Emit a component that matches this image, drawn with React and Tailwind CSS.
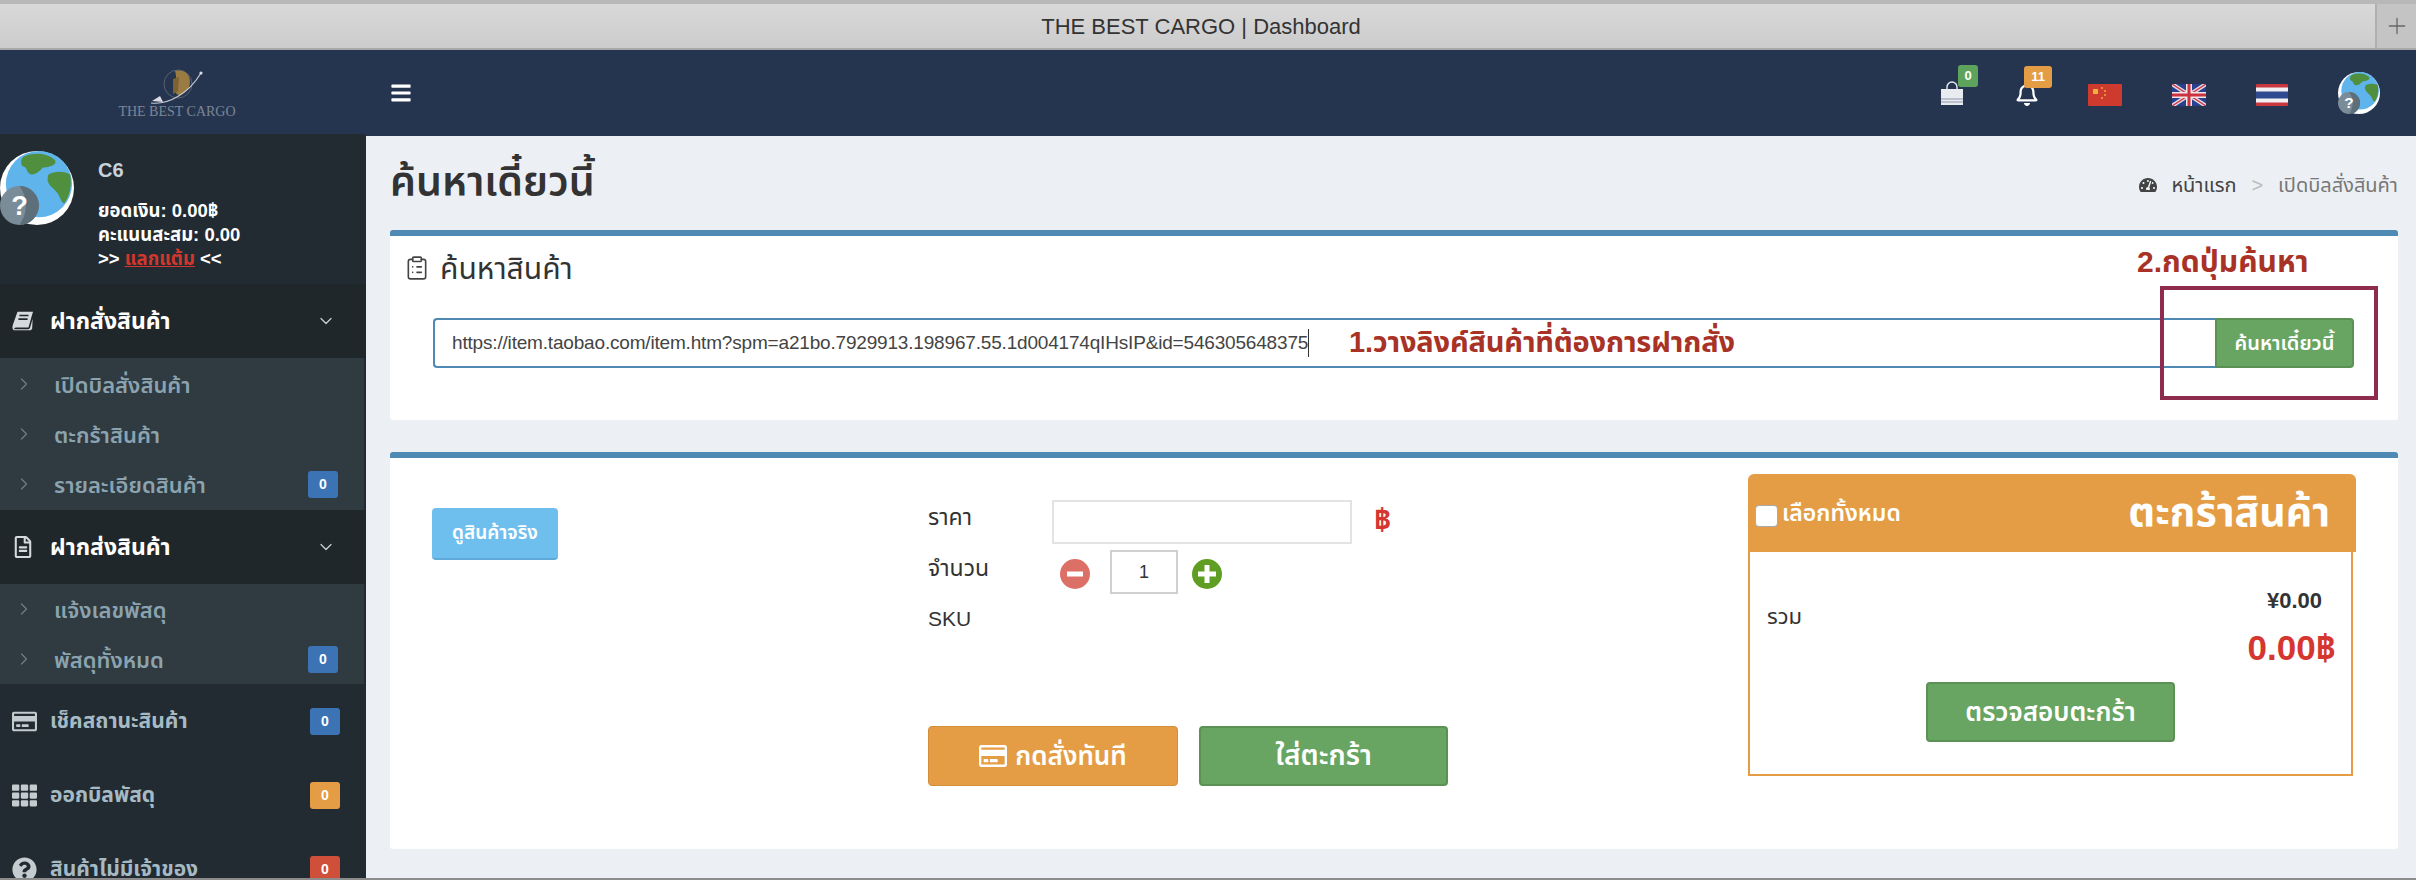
import React from 'react';
import { ChevronDown, ChevronRight, ClipboardList, Plus } from 'lucide-react';
import {
  FaBars,
  FaQuestionCircle,
  FaRegBell,
  FaRegCreditCard,
  FaRegFileAlt,
  FaTachometerAlt,
  FaTh,
} from 'react-icons/fa';

const URL_VALUE = 'https://item.taobao.com/item.htm?spm=a21bo.7929913.198967.55.1d004174qIHsIP&id=546305648375';

const Globe = ({ className }) => (
  <svg viewBox="0 0 76 76" className={className}>
    <circle cx="38" cy="38" r="38" fill="#fff" />
    <circle cx="40" cy="34" r="34" fill="#5fb4ec" />
    <path d="M24 6c10-5 24-4 32 3 4 4-4 8-12 8-4 5-10 9-14 6-3-2-2-6-6-7-3-1-3-7 0-10z" fill="#4f8f3d" />
    <path d="M50 24c6-3 14-4 22 0 2 10 0 22-6 30-4-2-4-8-8-12-4-5-12-8-8-18z" fill="#4f8f3d" />
    <circle cx="20" cy="56" r="20" fill="#7a8c98" />
    <path d="M20 36a20 20 0 0 1 0 40 34 34 0 0 0 0-40z" fill="#5d6f7b" />
    <text x="20" y="66" textAnchor="middle" fontSize="28" fontWeight="700" fill="#fff" fontFamily="Liberation Sans, sans-serif">?</text>
  </svg>
);

const Logo = () => (
  <div className="flex flex-col items-center">
    <svg viewBox="0 0 56 38" className="w-[56px] h-[38px]">
      <circle cx="29" cy="17" r="14" fill="none" stroke="#56616f" strokeWidth="1" />
      <path d="M26 4c9-2 15 3 15 11 0 7-6 12-11 14-3-3-7-6-5-10 2-3 3-9 1-15z" fill="#9a7b42" />
      <path d="M24 12l6-2-1 14-5 3z" fill="#7d6233" />
      <path d="M2 36c18 2 38-10 50-30" fill="none" stroke="#c5cad2" strokeWidth="1.2" />
      <circle cx="52" cy="6" r="1.6" fill="#d9dde3" />
      <path d="M3 34l8-5 3 6z" fill="#d9dde3" />
    </svg>
    <span className="font-['Liberation_Serif',serif] text-[14px] leading-[14px] text-[#7c8695] whitespace-nowrap">THE BEST CARGO</span>
  </div>
);

const BagIcon = () => (
  <svg viewBox="0 0 24 24" className="w-[24px] h-[24px]">
    <path d="M7 9V6a5 5 0 0 1 10 0v3" fill="none" stroke="#e8ebef" strokeWidth="1.4" />
    <path d="M1 8h22v16H1z" fill="#e8ebef" />
    <path d="M1 18h22M1 21h22" stroke="#8d97a8" strokeWidth="1" />
  </svg>
);

// slanted book, the icon packages only have an upright one
const BookIcon = ({ size, className }) => (
  <svg viewBox="0 0 24 22" width={size} height={size} className={className}>
    <path d="M6 1h17l-1 3-4 14H4.500C2.500 18 2 19 3 20h15l1.500-1 3-10.500-.5 11-1.500 1.500H3C.5 21 0 18 1 15z" fill="currentColor" />
    <path d="M8 5h10M7 9h10" stroke="#20272b" strokeWidth="1.800" />
  </svg>
);

const ChinaFlag = () => (
  <svg viewBox="0 0 34 22" className="w-[34px] h-[22px]">
    <rect width="34" height="22" rx="1" fill="#cf3a2e" />
    <rect x="5" y="5" width="5" height="5" fill="#eeb13c" />
    <rect x="13" y="3" width="2" height="2" fill="#e08c38" />
    <rect x="16" y="6" width="2" height="2" fill="#e08c38" />
    <rect x="16" y="10" width="2" height="2" fill="#e08c38" />
    <rect x="13" y="13" width="2" height="2" fill="#e08c38" />
  </svg>
);

const UkFlag = () => (
  <svg viewBox="0 0 34 22" className="w-[34px] h-[22px]">
    <rect width="34" height="22" fill="#27408f" />
    <path d="M0 0l34 22M34 0L0 22" stroke="#e8dce0" strokeWidth="4" />
    <path d="M0 0l34 22M34 0L0 22" stroke="#c9374a" strokeWidth="1.4" />
    <path d="M17 0v22M0 11h34" stroke="#efe6e8" strokeWidth="6" />
    <path d="M17 0v22M0 11h34" stroke="#cc3340" strokeWidth="3" />
  </svg>
);

const ThaiFlag = () => (
  <svg viewBox="0 0 32 22" className="w-[32px] h-[22px]">
    <rect width="32" height="22" rx="1" fill="#c9373f" />
    <rect y="3.5" width="32" height="15" fill="#f2f0f2" />
    <rect y="7.5" width="32" height="7" fill="#2f4a8e" />
  </svg>
);

const Badge = ({ color, children, className = '' }) => (
  <span className={`flex items-center justify-center w-[30px] h-[27px] rounded-[3px] text-white font-bold text-[14px] ${color} ${className}`}>
    {children}
  </span>
);

const SubItem = ({ label, badge, className = '' }) => (
  <div className={`flex items-center h-[50px] pl-[14px] pr-[26px] text-[#8ba3af] ${className}`}>
    <ChevronRight size={20} strokeWidth={1.5} className="text-[#6c7e88] shrink-0" />
    <span className="ml-[20px] mt-[2px] text-[22px] font-semibold">{label}</span>
    {badge && <Badge color="bg-[#3c73b5]" className="ml-auto">{badge}</Badge>}
  </div>
);

const MenuHeader = ({ Icon, label }) => (
  <div className="flex items-center h-[74px] pl-[12px] pr-[30px] bg-[#20272b] text-white">
    <Icon size={22} className="text-[#d6dadd] shrink-0" />
    <span className="ml-[16px] text-[23px] font-bold">{label}</span>
    <ChevronDown size={20} strokeWidth={1.5} className="ml-auto text-[#c9d0d4]" />
  </div>
);

const MenuItem = ({ Icon, label, badge, color }) => (
  <div className="flex items-center h-[74px] pl-[12px] pr-[26px] text-[#a6bac4]">
    <Icon size={25} className="text-[#c5ccd0] shrink-0" />
    <span className="ml-[13px] text-[21px] font-bold">{label}</span>
    <Badge color={color} className="ml-auto">{badge}</Badge>
  </div>
);

const Sidebar = () => (
  <aside className="w-[366px] shrink-0 -mt-[2px] bg-[#222b31] overflow-hidden">
    <div className="flex h-[150px] pt-[16px]">
      <Globe className="w-[74px] h-[76px] shrink-0" />
      <div className="ml-[24px] text-white font-bold text-[18.5px] leading-[24px]">
        <div className="text-[#c6d3dc] text-[20px] leading-[28px] mt-[6px] mb-[15px]">C6</div>
        <div>ยอดเงิน: 0.00฿</div>
        <div>คะแนนสะสม: 0.00</div>
        <div>&gt;&gt; <span className="text-[#d2372e] underline">แลกแต้ม</span> &lt;&lt;</div>
      </div>
    </div>
    <MenuHeader Icon={BookIcon} label="ฝากสั่งสินค้า" />
    <div className="bg-[#2f3a41] py-[1px] mr-[2px]">
      <SubItem label="เปิดบิลสั่งสินค้า" />
      <SubItem label="ตะกร้าสินค้า" />
      <SubItem label="รายละเอียดสินค้า" badge="0" />
    </div>
    <MenuHeader Icon={FaRegFileAlt} label="ฝากส่งสินค้า" />
    <div className="bg-[#2f3a41] mr-[2px]">
      <SubItem label="แจ้งเลขพัสดุ" />
      <SubItem label="พัสดุทั้งหมด" badge="0" />
    </div>
    <MenuItem Icon={FaRegCreditCard} label="เช็คสถานะสินค้า" badge="0" color="bg-[#3c73b5]" />
    <MenuItem Icon={FaTh} label="ออกบิลพัสดุ" badge="0" color="bg-[#e49d45]" />
    <MenuItem Icon={FaQuestionCircle} label="สินค้าไม่มีเจ้าของ" badge="0" color="bg-[#cf4f3b]" />
  </aside>
);

const SearchBox = () => (
  <section className="relative h-[190px] bg-white border-t-[6px] border-[#4f8ab5] rounded-[3px]">
    <div className="flex items-center h-[64px] pl-[14px] text-[#333]">
      <ClipboardList size={26} strokeWidth={1.5} className="text-[#444]" />
      <span className="ml-[10px] text-[30px]">ค้นหาสินค้า</span>
    </div>
    <div className="flex ml-[43px] mr-[44px] mt-[18px] h-[50px]">
      <div className="flex-1 relative flex items-center pl-[17px] border-2 border-r-0 border-[#4f8ab5] rounded-l-[4px] text-[#444] text-[19px] tracking-[-0.18px] whitespace-nowrap">
        {URL_VALUE}
        <span className="w-[1px] h-[28px] bg-[#333]" />
        <span className="absolute left-[914px] text-[#a93226] text-[29px] font-bold">1.วางลิงค์สินค้าที่ต้องการฝากสั่ง</span>
      </div>
      <button className="w-[139px] bg-[#68a562] border-2 border-[#5c9156] rounded-r-[4px] text-white text-[20px] font-semibold">ค้นหาเดี๋ยวนี้</button>
    </div>
    <div className="absolute left-[1747px] top-[3px] text-[#a93226] text-[30px] font-bold whitespace-nowrap">2.กดปุ่มค้นหา</div>
    <div className="absolute left-[1770px] top-[50px] w-[218px] h-[114px] border-4 border-[#8e2c4e]" />
  </section>
);

const Cart = () => (
  <div className="w-[608px] h-[302px] shrink-0">
    <div className="flex items-center h-[78px] pl-[7px] pr-[26px] bg-[#e49d45] rounded-t-[6px] text-white">
      <span className="w-[23px] h-[22px] bg-white border border-[#aaa] rounded-[4px] mt-[6px]" />
      <span className="ml-[4px] text-[23px] font-semibold">เลือกทั้งหมด</span>
      <span className="ml-auto text-[41px] font-bold">ตะกร้าสินค้า</span>
    </div>
    <div className="relative h-[224px] mr-[3px] border-2 border-t-0 border-[#e49d45] px-[17px] pt-[34px]">
      <div className="flex justify-between">
        <span className="text-[22px] text-[#333] mt-[14px]">รวม</span>
        <div className="text-right pr-[4px] font-bold">
          <div className="text-[22px] text-[#333] mr-[8px] leading-[30px]">¥0.00</div>
          <div className="text-[35px] text-[#d5362f] leading-[36px] mt-[14px] -mr-[6px]">0.00฿</div>
        </div>
      </div>
      <button className="block w-[249px] h-[60px] mx-auto mt-[16px] bg-[#68a562] border-2 border-[#5c9156] rounded-[4px] text-white text-[26px] font-semibold">ตรวจสอบตะกร้า</button>
    </div>
  </div>
);

const ProductBox = () => (
  <section className="flex h-[397px] mt-[32px] pl-[42px] pt-[16px] bg-white border-t-[6px] border-[#4f8ab5] rounded-[3px]">
    <div className="w-[496px] shrink-0 pt-[34px]">
      <button className="w-[126px] h-[52px] bg-[#6fbfee] border-b-2 border-[#5ea9d8] rounded-[4px] text-white text-[19px] font-semibold">ดูสินค้าจริง</button>
    </div>
    <div className="w-[820px] shrink-0 pt-[26px] text-[#333] text-[23px]">
      <div className="flex h-[50px]">
        <span className="w-[124px] leading-[34px]">ราคา</span>
        <span className="w-[300px] h-[44px] border-2 border-[#e3e3e3]" />
        <span className="ml-[22px] text-[#d5362f] text-[30px] leading-[40px] font-bold">฿</span>
      </div>
      <div className="flex h-[44px]">
        <span className="w-[124px] leading-[36px]">จำนวน</span>
        <div className="flex items-center">
          <svg viewBox="0 0 30 30" className="w-[30px] h-[30px] ml-[8px] mt-[4px]">
            <circle cx="15" cy="15" r="15" fill="#dd7066" />
            <rect x="7" y="12.5" width="16" height="5" fill="#fff" />
          </svg>
          <span className="flex items-center justify-center w-[68px] h-[44px] ml-[20px] border-2 border-[#d0d0d0] text-[18px]">1</span>
          <svg viewBox="0 0 30 30" className="w-[30px] h-[30px] ml-[14px] mt-[4px]">
            <circle cx="15" cy="15" r="15" fill="#5f9e22" />
            <path d="M12.500 6h5v6.500h6.500v5h-6.500v6.500h-5v-6.500h-6.500v-5h6.500z" fill="#fff" />
          </svg>
        </div>
      </div>
      <div className="mt-[7px] leading-[36px] text-[21px]">SKU</div>
      <div className="flex gap-[21px] mt-[89px]">
        <button className="flex items-center justify-center gap-[8px] w-[250px] h-[60px] bg-[#e49d45] border border-[#d38e3c] rounded-[4px] text-white text-[26px] font-semibold">
          <FaRegCreditCard size={28} />
          กดสั่งทันที
        </button>
        <button className="w-[249px] h-[60px] bg-[#68a562] border-2 border-[#5c9156] rounded-[4px] text-white text-[28px] font-semibold">ใส่ตะกร้า</button>
      </div>
    </div>
    <Cart />
  </section>
);

export default function App() {
  return (
    <div className="h-[880px] overflow-hidden flex flex-col bg-[#ecf0f5] font-['Liberation_Sans','Noto_Sans','Noto_Sans_Thai',sans-serif]">
      {/* window title bar */}
      <div className="relative flex items-center justify-center h-[50px] pr-[14px] shrink-0 border-t-[4px] border-b-2 border-t-[#b8b8b8] border-b-[#a8a8a8] bg-gradient-to-b from-[#d9d9d9] to-[#cccccc] text-[#333] text-[22px]">
        THE BEST CARGO | Dashboard
        <span className="absolute right-0 top-0 bottom-0 w-[41px] flex items-center justify-center border-l-2 border-[#b0b0b0] bg-[#c4c4c4]">
          <Plus size={26} strokeWidth={1.2} className="text-[#666]" />
        </span>
      </div>

      <header className="flex items-center h-[86px] shrink-0 bg-[#26354f]">
        <div className="w-[366px] flex justify-center shrink-0 pr-[12px]">
          <Logo />
        </div>
        <FaBars size={22} className="ml-[24px] text-white" />
        <div className="ml-auto flex items-center pr-[36px] pt-[4px]">
          <div className="relative -mt-[4px]">
            <BagIcon />
            <span className="absolute -top-[16px] left-[18px] flex items-center justify-center w-[20px] h-[22px] rounded-[3px] bg-[#5ea35c] text-white text-[13px] font-bold">0</span>
          </div>
          <div className="relative ml-[51px] -mt-[2px]">
            <FaRegBell size={24} className="text-white" />
            <span className="absolute -top-[16px] left-[9px] flex items-center justify-center w-[28px] h-[22px] rounded-[3px] bg-[#e49d45] text-white text-[13px] font-bold">11</span>
          </div>
          <div className="ml-[49px]"><ChinaFlag /></div>
          <div className="ml-[50px]"><UkFlag /></div>
          <div className="ml-[50px]"><ThaiFlag /></div>
          <Globe className="w-[42px] h-[42px] ml-[50px] -mt-[4px]" />
        </div>
      </header>

      <div className="flex flex-1 min-h-0">
        <Sidebar />
        <main className="flex-1 min-w-0 pl-[24px] pr-[18px]">
          <div className="flex items-center justify-between h-[94px]">
            <h1 className="text-[41px] font-semibold text-[#333]">ค้นหาเดี๋ยวนี้</h1>
            <div className="flex items-center text-[20px] text-[#444] mt-[4px]">
              <FaTachometerAlt size={18} className="mr-[14px] text-[#444]" />
              <span>หน้าแรก</span>
              <span className="mx-[15px] text-[#bbb]">&gt;</span>
              <span className="text-[#777]">เปิดบิลสั่งสินค้า</span>
            </div>
          </div>
          <SearchBox />
          <ProductBox />
        </main>
      </div>
      <div className="h-[2px] shrink-0 bg-[#8c8c8c]" />
    </div>
  );
}
